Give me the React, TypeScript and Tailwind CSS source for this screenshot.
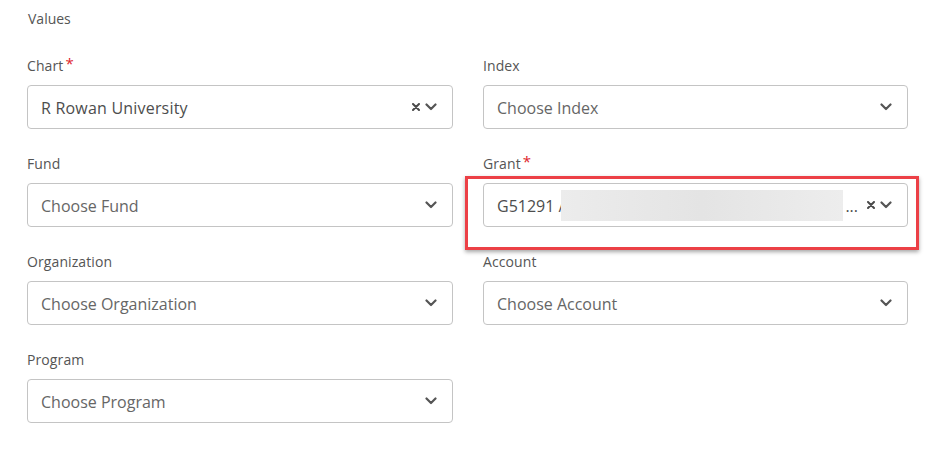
import React from 'react';

interface FieldProps {
  label: string;
  required?: boolean;
  value?: string;
  placeholder?: string;
  clearable?: boolean;
  children?: React.ReactNode;
}

const ClearIcon = () => (
  <svg width="8" height="8" viewBox="0 0 8 8" className="text-[#4a4a4a]">
    <path d="M1 1 L7 7 M7 1 L1 7" stroke="currentColor" strokeWidth="2" strokeLinecap="round" />
  </svg>
);

const ChevronIcon = () => (
  <svg width="12" height="8" viewBox="0 0 12 8" className="text-[#555]">
    <path d="M1.5 1.5 L6 6 L10.5 1.5" stroke="currentColor" strokeWidth="2.2" fill="none" strokeLinecap="round" strokeLinejoin="round" />
  </svg>
);

const Field: React.FC<FieldProps> = ({ label, required, value, placeholder, clearable, children }) => {
  return (
    <div className="flex flex-col">
      <div className="h-5 leading-5 text-[14px] tracking-[0.1px] text-[#555] mb-[9px] flex">
        <span>{label}</span>
        {required && <span className="text-[#e0232d] text-[15px] leading-[14px] ml-[2px]">*</span>}
      </div>
      <div className="h-[44px] border border-[#c4c4c4] rounded-[4px] bg-white flex items-center pl-[13px] pr-[15px]">
        <div className="flex-1 min-w-0 text-[16px] pt-[2px] whitespace-nowrap overflow-hidden">
          {children ? children : value ? (
            <span className="text-[#4d4d4d] tracking-[0.2px]">{value}</span>
          ) : (
            <span className="text-[#666]">{placeholder}</span>
          )}
        </div>
        <div className="flex items-center gap-[5px]">
          {clearable && <ClearIcon />}
          <ChevronIcon />
        </div>
      </div>
    </div>
  );
};

export default function App() {
  return (
    <div className="w-[927px] h-[467px] bg-white pt-[10px] pl-[27px] pr-[19px]" style={{ fontFamily: '"Open Sans", sans-serif' }}>
      <div className="text-[14px] leading-[18px] text-[#555] pl-[1px] mb-[28px]">Values</div>
      <div className="grid grid-cols-[426px_425px] gap-x-[30px] gap-y-[25px]">
        <Field label="Chart" required value="R Rowan University" clearable />
        <Field label="Index" placeholder="Choose Index" />
        <Field label="Fund" placeholder="Choose Fund" />
        <div className="relative">
          <Field label="Grant" required clearable>
            <div className="flex items-center text-[#4d4d4d] pr-[12px]">
              <span>G51291 /</span>
              <span className="ml-[-3px] mt-[-2px] w-[282px] h-[31px] shrink-0 bg-gradient-to-r from-[#ececec] via-[#e4e4e4] to-[#ededed]" />
              <span className="ml-[2px]">...</span>
            </div>
          </Field>
          <div className="absolute left-[-18px] top-[22px] w-[454px] h-[74px] border-[3px] border-[#ec4046] shadow-[0_2px_4px_rgba(0,0,0,0.35)] pointer-events-none" />
        </div>
        <Field label="Organization" placeholder="Choose Organization" />
        <Field label="Account" placeholder="Choose Account" />
        <Field label="Program" placeholder="Choose Program" />
      </div>
    </div>
  );
}
